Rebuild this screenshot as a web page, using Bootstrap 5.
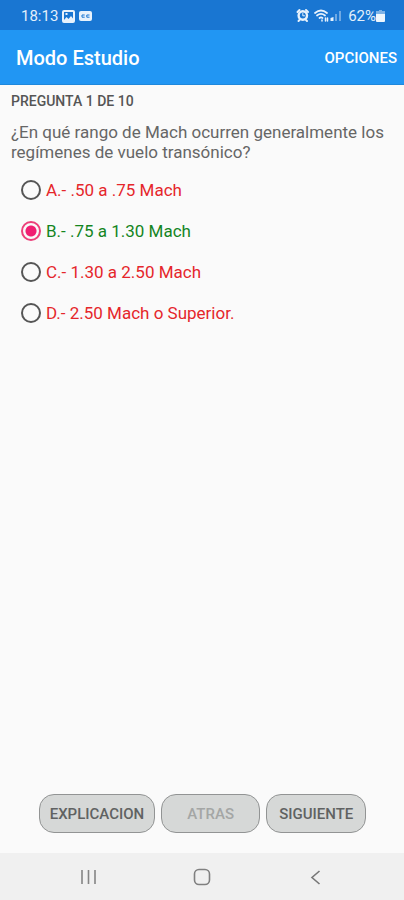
<!DOCTYPE html>
<html lang="es">
<head>
<meta charset="utf-8">
<meta name="viewport" content="width=device-width, initial-scale=1">
<title>Modo Estudio</title>
<link href="https://cdn.jsdelivr.net/npm/bootstrap@5.3.0/dist/css/bootstrap.min.css" rel="stylesheet">
<style>
  body { font-family: Roboto, sans-serif; background: #fafafa; color: #666; font-size: 17px; line-height: 20px; }
  .status { background: #1976d2; color: #e3effb; height: 30px; font-size: 15px; padding: 2px 19px 0 21px; }
  .status .level { font-size: 15px; }
  .appbar { background: #2196f3; height: 55px; padding: 2px 7px 0 16px; border-bottom: 1px solid #1e88dc; }
  .appbar h1 { font-size: 20px; line-height: 24px; font-weight: 500; }
  .appbar .options { color: #fff; font-size: 15px; font-weight: 500; line-height: 20px; }
  .content { padding: 6px 11px; }
  .counter { font-size: 14px; line-height: 20px; font-weight: 500; color: #555; margin-bottom: 11px; }
  .question { font-size: 17px; line-height: 20px; }
  .answers { padding-top: 7px; }
  .answer { height: 41px; padding-left: 10px; gap: 5px; }
  .answer .form-check-input { width: 20px; height: 20px; border: 2px solid #555; background-color: transparent; box-shadow: none; }
  .answer .form-check-input:checked { border-color: #ec407a; background-image: radial-gradient(circle, #f01f72 5px, transparent 6px); background-size: 100% 100%; background-origin: border-box; }
  .wrong { color: #e5262b; }
  .right { color: #14851f; }
  .actions { gap: 6px; padding: 0 38px 20px 39px; }
  .actions .btn { flex: 5 1 0; height: 39px; padding: 0 8px; border: 1px solid #929494; border-radius: 15px; background: #d6d8d7; color: #606262; font-size: 15px; line-height: 20px; font-weight: 500; }
  .actions .btn.wide { flex-grow: 6; }
  .actions .btn:disabled { color: #a4a6a5; opacity: 1; }
  .sysnav { background: #f0f0f0; height: 47px; padding: 0 32px; }
</style>
</head>
<body>
<div class="d-flex flex-column min-vh-100">
  <div class="status d-flex align-items-center justify-content-between">
    <div class="d-flex align-items-center gap-1">
      <span>18:13</span>
      <svg width="13" height="13" viewBox="0 0 13 13" aria-hidden="true"><path fill="#e8f2fc" fill-rule="evenodd" d="M2 0h9a2 2 0 0 1 2 2v9a2 2 0 0 1-2 2H2a2 2 0 0 1-2-2V2a2 2 0 0 1 2-2ZM2 2v8l2.500-3 2 2L9 6l2 2.500V2ZM3.500 3h2v2h-2Z"/></svg>
      <svg width="13" height="10" viewBox="0 0 13 10" aria-hidden="true"><rect width="13" height="10" rx="2" fill="#e8f2fc"/><path d="M5.700 4H3v2.200h2.700M10.500 4H7.800v2.200h2.700" fill="none" stroke="#1976d2" stroke-width="1"/></svg>
    </div>
    <div class="d-flex align-items-center">
      <svg width="48" height="16" viewBox="0 0 48 16" aria-hidden="true">
        <g fill="none" stroke="#e8f2fc" stroke-linecap="round">
          <path d="m1.500 4 2-2M10 2l2 2M3.500 12l-1 1M10 12l1 1" stroke-width="2"/>
          <circle cx="6.800" cy="7.500" r="4.200" stroke-width="2.400"/>
          <path d="M6.800 5.500v2.300h1.700" stroke-width="1"/>
          <path d="M19 5q6-5 12 0M21 7.500q4-3.300 8 0M23.500 10q1.500-1.300 3 0" stroke-width="1.700"/>
          <path d="M26 13V12M29.500 13V10M31.500 10v3" stroke-width="1.500"/>
        </g>
        <path d="M34.500 13v-3l3-1v4Z" fill="#e8f2fc"/><path d="M39 13V6h2v7ZM43 13V3h2v10Z" fill="#6fa9e3"/>
      </svg>
      <span class="level ms-1">62%</span>
      <svg width="9" height="12" viewBox="0 0 9 12" aria-hidden="true"><path d="M3 0h3v1h3v3H0V1h3Z" fill="#7eb2e6"/><path d="M0 4h9v7q0 1-1 1H1q-1 0-1-1Z" fill="#eef6fd"/></svg>
    </div>
  </div>
  <header class="appbar d-flex align-items-center justify-content-between">
    <h1 class="text-white m-0">Modo Estudio</h1>
    <button type="button" class="options btn p-0 border-0">OPCIONES</button>
  </header>
  <main class="content flex-grow-1">
    <h2 class="counter">PREGUNTA 1 DE 10</h2>
    <fieldset>
      <legend class="question float-none m-0 p-0">¿En qué rango de Mach ocurren generalmente los regímenes de vuelo transónico?</legend>
      <div class="answers">
        <div class="answer d-flex align-items-center"><input class="form-check-input m-0" type="radio" name="answer" id="a"><label class="wrong" for="a">A.- .50 a .75 Mach</label></div>
        <div class="answer d-flex align-items-center"><input class="form-check-input m-0" type="radio" name="answer" id="b" checked><label class="right" for="b">B.- .75 a 1.30 Mach</label></div>
        <div class="answer d-flex align-items-center"><input class="form-check-input m-0" type="radio" name="answer" id="c"><label class="wrong" for="c">C.- 1.30 a 2.50 Mach</label></div>
        <div class="answer d-flex align-items-center"><input class="form-check-input m-0" type="radio" name="answer" id="d"><label class="wrong" for="d">D.- 2.50 Mach o Superior.</label></div>
      </div>
    </fieldset>
  </main>
  <div class="actions d-flex">
    <button type="button" class="btn wide">EXPLICACION</button>
    <button type="button" class="btn" disabled>ATRAS</button>
    <button type="button" class="btn">SIGUIENTE</button>
  </div>
  <nav class="sysnav d-flex align-items-center" aria-label="Sistema">
    <button type="button" class="btn border-0 p-0 flex-fill d-flex justify-content-center" aria-label="Recientes"><svg width="16" height="16" viewBox="0 0 16 16"><path d="M2 1v14M8.500 1v14M15 1v14" stroke="#858585" stroke-width="1.600"/></svg></button>
    <button type="button" class="btn border-0 p-0 flex-fill d-flex justify-content-center" aria-label="Inicio"><svg width="18" height="18" viewBox="0 0 18 18"><rect x="1.500" y="1.500" width="15" height="15" rx="4.500" fill="none" stroke="#808080" stroke-width="1.600"/></svg></button>
    <button type="button" class="btn border-0 p-0 flex-fill d-flex justify-content-center" aria-label="Volver"><svg width="16" height="16" viewBox="0 0 16 16"><path d="M11.500 2 4 8.500 11.500 15" fill="none" stroke="#777" stroke-width="1.600"/></svg></button>
  </nav>
</div>
<script src="https://cdn.jsdelivr.net/npm/bootstrap@5.3.0/dist/js/bootstrap.bundle.min.js"></script>
</body>
</html>
